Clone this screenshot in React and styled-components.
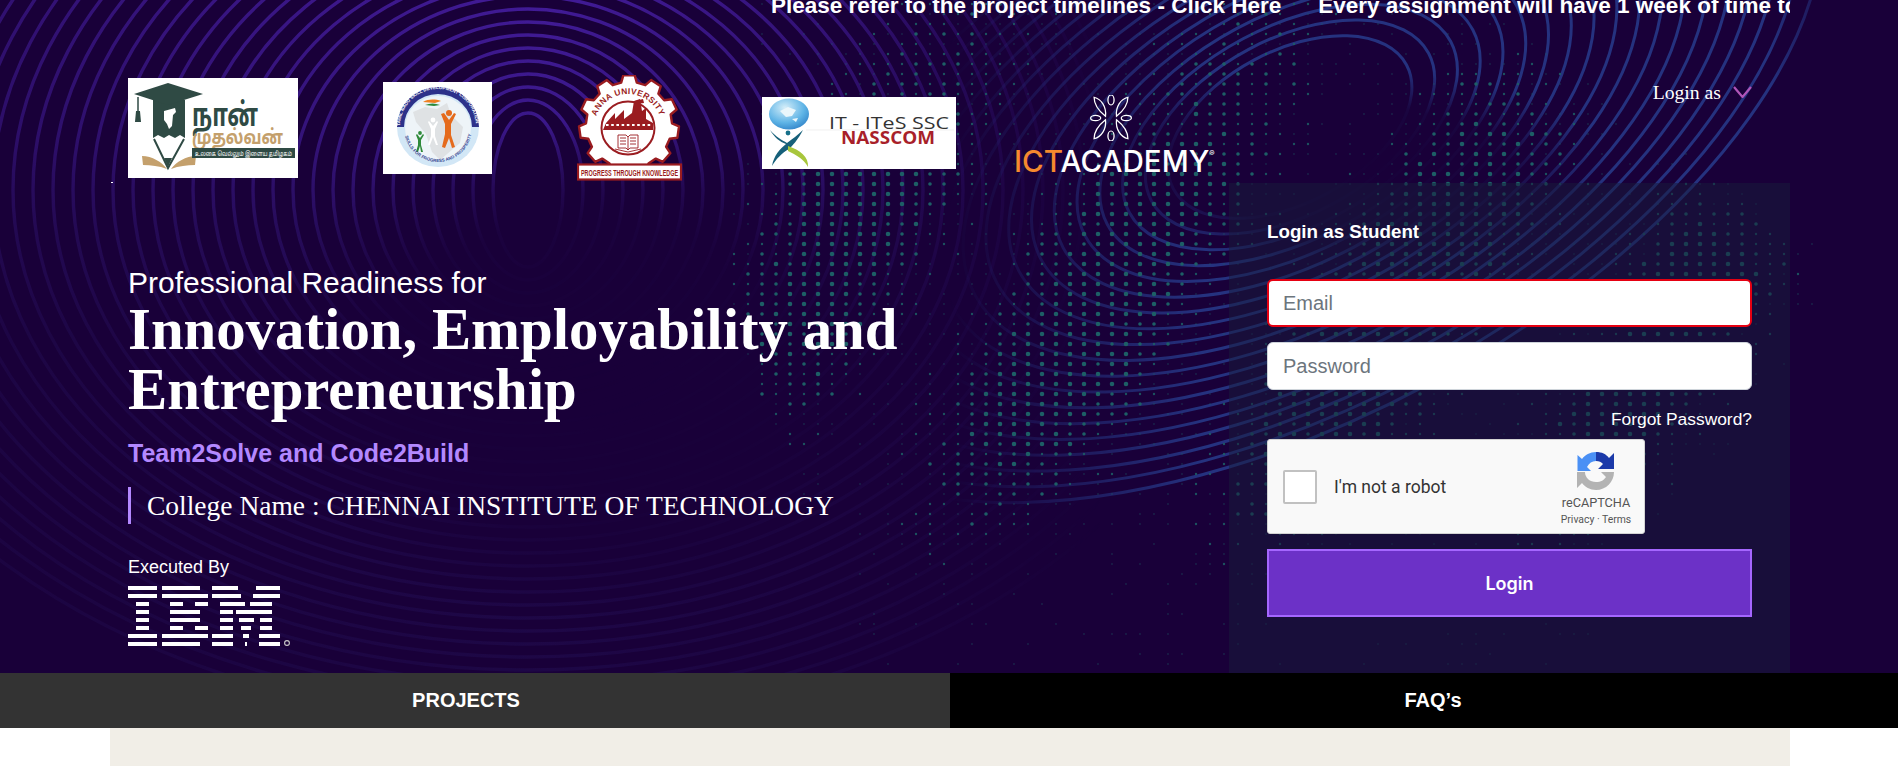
import React from "react";
import styled, { createGlobalStyle } from "styled-components";

const GlobalStyle = createGlobalStyle`
    html, body {
        margin: 0;
        height: 766px;
        overflow: hidden;
        background: #fff;
        font-family: "Liberation Sans", Arial, sans-serif;
    }
`;

const Hero = styled.section`
    position: relative;
    height: 673px;
    background: #190039;
    overflow: hidden;
`;

const Backdrop = styled.svg`
    position: absolute;
    inset: 0;
    width: 1898px;
    height: 673px;
`;

const Wrap = styled.div`
    position: relative;
    width: 1680px;
    margin-left: 110px;
`;

const Marquee = styled.div`
    height: 22px;
    padding-left: 661px;
    overflow: hidden;
    white-space: nowrap;
    display: flex;
    gap: 37px;
`;

const MarqueeItem = styled.span`
    margin-top: -10px;
    line-height: 32px;
    font-size: 22.5px;
    font-weight: 700;
    color: #fff;
`;

const Header = styled.header`
    height: 161px;
    padding: 0 38px 0 18px;
    display: flex;
    align-items: flex-start;
`;

const Logo = styled.div`
    flex: none;
    margin-left: ${p => p.$left || 0}px;
    margin-top: ${p => p.$top}px;
    line-height: 0;
`;

const Speck = styled.i`
    position: absolute;
    left: 1px;
    top: 182px;
    width: 2px;
    height: 1px;
    background: #fff;
`;

const IctIcon = styled.div`
    display: flex;
    justify-content: center;
    padding-right: 6px;
`;

const IctName = styled.div`
    margin-top: 6px;
    font-family: "Inter", sans-serif;
    font-size: 29.6px;
    line-height: 28px;
    font-weight: 500;
    color: #fff;
    text-align: center;
    white-space: nowrap;

    b {
        font-weight: 500;
        color: #f58a2e;
    }

    sup {
        font-size: 8px;
        line-height: 0;
        vertical-align: 16px;
    }
`;

const LoginAs = styled.button`
    margin: 58px 0 0 auto;
    padding: 0;
    background: none;
    border: 0;
    display: flex;
    align-items: center;
    gap: 12px;
    font-family: "Liberation Serif", serif;
    font-size: 19.7px;
    line-height: 24px;
    color: #fff;
`;

const Main = styled.div`
    display: grid;
    grid-template-columns: 1119px 561px;
    height: 490px;
`;

const Intro = styled.div`
    padding: 83px 0 0 18px;
`;

const Lead = styled.div`
    font-size: 30px;
    line-height: 34px;
    color: #fff;
`;

const Headline = styled.h1`
    margin: 0;
    font-family: "Liberation Serif", serif;
    font-size: 58.8px;
    line-height: 60px;
    font-weight: 700;
    color: #fff;
    width: 800px;
`;

const Tagline = styled.div`
    margin-top: 18px;
    font-size: 25px;
    line-height: 30px;
    font-weight: 700;
    color: #b388ff;
`;

const College = styled.div`
    margin-top: 19px;
    padding-left: 16px;
    border-left: 3px solid #b388ff;
    font-family: "Liberation Serif", serif;
    font-size: 27.5px;
    line-height: 37px;
    color: #fff;
    white-space: nowrap;
`;

const Executed = styled.div`
    margin-top: 33px;
    font-size: 18px;
    line-height: 21px;
    color: #fff;
`;

const IbmMark = styled.svg`
    display: block;
    margin-top: 8px;
`;

const Panel = styled.div`
    padding: 38px 38px 0;
    background: rgba(24, 28, 60, 0.5);
`;

const PanelTitle = styled.div`
    font-size: 18.75px;
    line-height: 22px;
    font-weight: 700;
    color: #fff;
`;

const Field = styled.input`
    display: block;
    box-sizing: border-box;
    width: 100%;
    height: 48px;
    margin-top: ${p => p.$top}px;
    padding: 0 ${p => (p.$invalid ? 14 : 15)}px;
    background: #fff;
    border: ${p => (p.$invalid ? "2px solid #e60012" : "1px solid #ced4da")};
    border-radius: 6px;
    font-family: "Liberation Sans", sans-serif;
    font-size: 20px;
    outline: none;

    &::placeholder {
        color: #6c757d;
        opacity: 1;
    }
`;

const Forgot = styled.div`
    margin-top: 19px;
    text-align: right;
    font-size: 17.4px;
    line-height: 20px;
    color: #fff;
`;

const Captcha = styled.div`
    box-sizing: border-box;
    width: 378px;
    height: 95px;
    margin-top: 10px;
    padding: 0 10px 0 15px;
    background: #f9f9f9;
    border: 1px solid #d3d3d3;
    border-radius: 3px;
    display: flex;
    align-items: center;
    font-family: "Roboto", sans-serif;
`;

const CaptchaBox = styled.div`
    box-sizing: border-box;
    width: 34px;
    height: 34px;
    background: #fff;
    border: 2px solid #c1c1c1;
    border-radius: 2px;
`;

const CaptchaLabel = styled.span`
    margin-left: 17px;
    font-size: 17.5px;
    color: #333;
`;

const CaptchaBrand = styled.div`
    margin-left: auto;
    width: 76px;
    padding-top: 5px;
    display: flex;
    flex-direction: column;
    align-items: center;
    color: #555;
`;

const BrandName = styled.span`
    margin-top: 5px;
    font-size: 12.7px;
    line-height: 15px;
`;

const BrandLinks = styled.span`
    margin-top: 3px;
    font-size: 10.4px;
    line-height: 13px;
    white-space: nowrap;
`;

const Submit = styled.button`
    display: block;
    width: 100%;
    height: 68px;
    margin-top: 15px;
    background: #6c31c7;
    border: 2px solid #a566ff;
    font-family: "Inter", sans-serif;
    font-size: 18px;
    font-weight: 600;
    color: #fff;
`;

const Tabs = styled.nav`
    display: grid;
    grid-template-columns: 950px 948px;
    height: 55px;
`;

const Tab = styled.div`
    display: flex;
    align-items: center;
    justify-content: center;
    padding: ${p => (p.$active ? "0 18px 0 0" : "0 0 0 18px")};
    background: ${p => (p.$active ? "#333" : "#000")};
    font-size: 20px;
    font-weight: 700;
    color: #fff;
`;

const Content = styled.main`
    width: 1680px;
    height: 38px;
    margin-left: 110px;
    background: #f1eee7;
`;

// seeded noise so that the dot field is the same on every render
const noise = (x, y) => {
    const v = Math.sin(x * 12.9898 + y * 78.233) * 43758.5453;
    return v - Math.floor(v);
};

function dotField() {
    const buckets = ["", "", "", ""];
    for (let x = 706; x < 1860; x += 14) {
        for (let y = 4; y < 673; y += 10) {
            const left = y < 170 ? 735 + (170 - y) * 0.1 : y < 300 ? 722 : 722 + (y - 300) * 0.42;
            const right = y < 270 ? 1850 - (270 - y) * 1.4 : 1850 - (y - 270) * 0.6;
            if (x < left || x > right) continue;
            const band = y < 170 ? 0.35 + (y / 170) * 0.4 : y < 400 ? 1 : Math.max(0.08, 1 - (y - 400) / 190);
            const edge = Math.min(1, (x - left) / 170 + 0.45, (right - x) / 150 + 0.2);
            const wave = 0.55 + 0.45 * Math.sin(x * 0.021 + y * 0.012);
            const s = band * edge * wave + (noise(x, y) - 0.5) * 0.4;
            if (s < 0.18) continue;
            const i = s > 0.72 ? 3 : s > 0.5 ? 2 : s > 0.32 ? 1 : 0;
            buckets[i] += `M${x} ${y}h0`;
        }
    }
    return buckets;
}

const dots = dotField();
const purpleRings = Array.from({ length: 36 }, (_, k) => k);
const blueRings = Array.from({ length: 19 }, (_, k) => k + 2);

function HeroBackdrop() {
    return (
        <Backdrop viewBox="0 0 1898 673" aria-hidden="true">
            <defs>
                <linearGradient id="ringFade" gradientUnits="userSpaceOnUse" x1="0" y1="0" x2="0" y2="673">
                    <stop offset="0" stopColor="#421b98" />
                    <stop offset="0.2" stopColor="#3a1788" />
                    <stop offset="0.34" stopColor="#2a0e62" />
                    <stop offset="0.5" stopColor="#21094d" />
                    <stop offset="1" stopColor="#1e0746" />
                </linearGradient>
                <linearGradient id="blueFade" gradientUnits="userSpaceOnUse" x1="950" y1="0" x2="1860" y2="0">
                    <stop offset="0" stopColor="#000" />
                    <stop offset="0.28" stopColor="#fff" />
                    <stop offset="0.9" stopColor="#fff" />
                    <stop offset="1" stopColor="#000" />
                </linearGradient>
                <linearGradient id="purpleEdge" gradientUnits="userSpaceOnUse" x1="0" y1="0" x2="1100" y2="0">
                    <stop offset="0" stopColor="#999" />
                    <stop offset="0.5" stopColor="#fff" />
                    <stop offset="0.75" stopColor="#aaa" />
                    <stop offset="1" stopColor="#000" />
                </linearGradient>
                <radialGradient id="purpleHole">
                    <stop offset="0" stopColor="#000" />
                    <stop offset="0.6" stopColor="#000" stopOpacity="0.85" />
                    <stop offset="1" stopColor="#000" stopOpacity="0" />
                </radialGradient>
                <radialGradient id="blueHole">
                    <stop offset="0" stopColor="#000" />
                    <stop offset="0.6" stopColor="#000" stopOpacity="0.9" />
                    <stop offset="1" stopColor="#000" stopOpacity="0" />
                </radialGradient>
                <mask id="blueMask" maskUnits="userSpaceOnUse" x="0" y="0" width="1898" height="673">
                    <rect width="1898" height="673" fill="url(#blueFade)" />
                    <ellipse cx="1340" cy="165" rx="270" ry="100" fill="url(#blueHole)" />
                </mask>
                <mask id="purpleMask" maskUnits="userSpaceOnUse" x="0" y="0" width="1898" height="673">
                    <rect width="1898" height="673" fill="url(#purpleEdge)" />
                    <ellipse cx="590" cy="370" rx="340" ry="250" fill="url(#purpleHole)" />
                </mask>
            </defs>
            <g mask="url(#purpleMask)" fill="none" stroke="url(#ringFade)" strokeWidth="3.4">
                {purpleRings.map(k => (
                    <ellipse key={k} cx="528" cy="190" rx={35 + 20 * k} ry={77 + 13 * k} />
                ))}
            </g>
            <g mask="url(#blueMask)" fill="none" stroke="#25327f" strokeWidth="3">
                {blueRings.map(k => (
                    <ellipse
                        key={k}
                        cx="1290"
                        cy="127"
                        rx={82 + 25 * k}
                        ry={52 + 12 * k}
                        transform="rotate(-28 1290 127)"
                    />
                ))}
            </g>
            <g fill="none" stroke="#1d5f66" strokeLinecap="round">
                <path d={dots[0]} strokeWidth="1.4" opacity="0.7" />
                <path d={dots[1]} strokeWidth="2.4" opacity="0.85" />
                <path d={dots[2]} strokeWidth="3.6" />
                <path d={dots[3]} strokeWidth="4.6" />
            </g>
        </Backdrop>
    );
}

function NaanLogo() {
    const green = "#2f4a44";
    const tan = "#c4a06c";
    const tamil = "'Noto Sans Tamil', 'Lohit Tamil', 'Noto Sans', sans-serif";
    return (
        <svg width="170" height="100" viewBox="0 0 170 100">
            <rect width="170" height="100" fill="#fff" />
            <path d="M25 22h32v38l-5-3-5 3-6-3-5 3-6-3-5 3z" fill={green} />
            <path d="M26 61 40 90 56 61" fill="none" stroke={green} strokeWidth="2" />
            <path d="M36 80 40 89 44 80z" fill={green} />
            <path d="M6 16 40 5 75 16 40 27z" fill={green} />
            <path d="M10 19v22" stroke={green} strokeWidth="1.5" />
            <path d="M8 33h4l1 11H7z" fill={green} />
            <path d="M36 33l11-3 1 4-3 3-1 11-3 3-2-5-3-4z" fill="#fff" />
            <path d="M14 78c10 0 20 6 25 13-8-3-16-4-24-4zM68 78c-10 0-20 6-25 13 8-3 16-4 24-4z" fill={tan} />
            <text x="64" y="48" fontFamily={tamil} fontSize="32" fontWeight="700" fill={green} textLength="66" lengthAdjust="spacingAndGlyphs">நான்</text>
            <text x="64" y="66" fontFamily={tamil} fontSize="20" fontWeight="700" fill={tan} textLength="91" lengthAdjust="spacingAndGlyphs">முதல்வன்</text>
            <rect x="64" y="70" width="103" height="10" fill={green} />
            <text x="67" y="77.500" fontFamily={tamil} fontSize="6.500" fill="#fff" textLength="97" lengthAdjust="spacingAndGlyphs">உலகை வெல்லும் இளைய தமிழகம்</text>
        </svg>
    );
}

function SkillLogo() {
    return (
        <svg width="109" height="92" viewBox="0 0 109 92">
            <defs>
                <path id="skillTop" d="M17 45a38 38 0 0 1 76 0" />
                <path id="skillBottom" d="M21 46a34 34 0 0 0 68 0" />
            </defs>
            <rect width="109" height="92" fill="#fff" />
            <ellipse cx="55" cy="45" rx="41" ry="40" fill="#d2e7f6" />
            <path d="M14 45a41 40 0 0 1 82 0h-7a34 33 0 0 0-68 0z" fill="#2c318a" />
            <ellipse cx="55" cy="46" rx="33" ry="32" fill="#eef4f8" />
            <path d="M30 30l12-5 12 2 10-6 4 12 12 12-3 16-20 17-8-8-6-18-10-12z" fill="#dfe2e4" />
            <path d="M40 20c5-3 12-3 18-1l-6 2z" fill="#ef7f22" />
            <path d="M42 23c5-2 10-2 15 0l-6 1z" fill="#2c8a3c" />
            <path d="M61 31l5 7 5-7 2 1-5 10v11l4 12-3 1-3-10-4 10-3-1 3-13V42l-4-10z" fill="#e56a1b" />
            <circle cx="66" cy="31" r="3" fill="#e56a1b" />
            <path d="M46 39l4 5 4-5 1 1-3 7v7l3 9h-2l-3-8-3 8h-2l3-9v-7l-3-7z" fill="#fff" />
            <circle cx="50" cy="38" r="2.400" fill="#fff" />
            <path d="M34 52l3 4 3-4 1 1-3 5v5l2 7h-2l-1-6-2 6h-2l2-7v-5l-2-5z" fill="#2f8a3a" />
            <circle cx="37" cy="51" r="1.900" fill="#2f8a3a" />
            <text fontFamily="'Liberation Sans', sans-serif" fontSize="4.600" fontWeight="700" fill="#fff">
                <textPath href="#skillTop" startOffset="1">TAMIL NADU SKILL DEVELOPMENT CORPORATION</textPath>
            </text>
            <text fontFamily="'Liberation Sans', sans-serif" fontSize="4.400" fontWeight="700" fill="#3b4a94">
                <textPath href="#skillBottom" startOffset="8">SKILLS FOR PROGRESS AND PROSPERITY</textPath>
            </text>
        </svg>
    );
}

function gearPath(cx, cy, outer, inner, teeth) {
    const step = (Math.PI * 2) / teeth;
    let d = "";
    for (let i = 0; i < teeth; i++) {
        const a = i * step - Math.PI / 2;
        const pts = [
            [inner, a - step * 0.32],
            [outer, a - step * 0.2],
            [outer, a + step * 0.2],
            [inner, a + step * 0.32],
        ];
        pts.forEach(([r, t], j) => {
            const px = (cx + r * Math.cos(t)).toFixed(1);
            const py = (cy + r * Math.sin(t)).toFixed(1);
            d += `${i === 0 && j === 0 ? "M" : "L"}${px} ${py}`;
        });
    }
    return d + "Z";
}

function AnnaLogo() {
    const maroon = "#9a1c20";
    return (
        <svg width="106" height="106" viewBox="0 0 106 106">
            <defs>
                <path id="annaArc" d="M17 53a34 34 0 0 1 68 0" />
            </defs>
            <path d={gearPath(52, 50, 50, 43, 11)} fill="#fff" stroke={maroon} strokeWidth="2.400" strokeLinejoin="round" />
            <circle cx="51" cy="53" r="26.500" fill="#fff" stroke={maroon} strokeWidth="2" />
            <path d="M26 55L29 48L38 38V44L47 35V44L55 38L57 26L63 24L65 36L69 33V44L76 48L76 55Z" fill={maroon} />
            <path d="M58 26l8-2 1 4-7 1z" fill={maroon} />
            <path d="M29 50h46" stroke="#fff" strokeWidth="1.800" strokeDasharray="2.600 2.600" />
            <g fill="none" stroke={maroon} strokeWidth="0.9">
                <path d="M41 60h8l2 2 2-2h8v13h-8l-2 2-2-2h-8z" />
                <path d="M38 74l13 3 13-3M51 62v13M43 63h6M43 66h6M43 69h6M53 63h6M53 66h6M53 69h6" />
            </g>
            <text fontFamily="'Liberation Sans', sans-serif" fontSize="8.400" fontWeight="700" fill={maroon} textAnchor="middle" letterSpacing="0.4">
                <textPath href="#annaArc" startOffset="50%">ANNA UNIVERSITY</textPath>
            </text>
            <rect x="1" y="89.500" width="103" height="15" fill="#fff" stroke={maroon} strokeWidth="2.200" />
            <text x="52.500" y="100.500" textAnchor="middle" fontFamily="'Liberation Sans', sans-serif" fontSize="9.400" fontWeight="700" fill={maroon} textLength="97" lengthAdjust="spacingAndGlyphs">PROGRESS THROUGH KNOWLEDGE</text>
        </svg>
    );
}

function NasscomLogo() {
    return (
        <svg width="194" height="72" viewBox="0 0 194 72">
            <defs>
                <radialGradient id="globe" cx="0.4" cy="0.3" r="0.8">
                    <stop offset="0" stopColor="#d5eef9" />
                    <stop offset="0.6" stopColor="#5fb4e6" />
                    <stop offset="1" stopColor="#2a7cc4" />
                </radialGradient>
            </defs>
            <rect width="194" height="72" fill="#fff" />
            <ellipse cx="27" cy="17" rx="20" ry="15.500" fill="url(#globe)" />
            <path d="M18 14l8-4 8 3-4 6-6 1zM30 22l6-1-2 4z" fill="#eaf6fb" />
            <path d="M8 33C14 40 20 43 25 46C30 42 36 38 41 33C36 43 30 49 27 52C20 56 14 62 10 69C12 58 18 52 24 47C18 45 12 40 8 33Z" fill="#16607a" />
            <path d="M26 49C38 53 47 60 46 70C42 62 34 58 26 54Z" fill="#a8c63c" />
            <circle cx="26" cy="36" r="2.400" fill="#16708a" />
            <path d="M44 33h148" stroke="#e6e6e6" strokeWidth="0.6" />
            <text x="67" y="32" fontFamily="'Open Sans', sans-serif" fontSize="17" fontWeight="500" fill="#333" textLength="120" lengthAdjust="spacingAndGlyphs">IT - ITeS SSC</text>
            <text x="79" y="47" fontFamily="'Open Sans', sans-serif" fontSize="17" fontWeight="700" fill="#a81f2a" textLength="94" lengthAdjust="spacingAndGlyphs">NASSCOM</text>
        </svg>
    );
}

function IctFlower() {
    const leaf = "M0 -5C7 -11 11 -18 11 -25C4 -23 -1 -15 0 -5Z";
    return (
        <svg width="46" height="46" viewBox="-21 -23 42 46" fill="none" stroke="#fff" strokeWidth="1.2" preserveAspectRatio="none">
            <ellipse cx="0" cy="-18" rx="2.800" ry="5" />
            <ellipse cx="0" cy="18" rx="2.800" ry="5" />
            <ellipse cx="-14" cy="0" rx="4.600" ry="2.600" />
            <ellipse cx="14" cy="0" rx="4.600" ry="2.600" />
            <path d={leaf} transform="translate(5 3) scale(0.95)" />
            <path d={leaf} transform="translate(-5 3) scale(-0.95 0.95)" />
            <path d={leaf} transform="translate(5 -3) scale(0.95 -0.95)" />
            <path d={leaf} transform="translate(-5 -3) scale(-0.95 -0.95)" />
        </svg>
    );
}

// one row of segments per stripe of the logo
const ibmRows = [
    [[0, 29], [34, 72], [84, 110], [128, 152]],
    [[0, 29], [34, 80], [84, 113], [125, 152]],
    [[8, 21], [42, 55], [67, 80], [92, 117], [122, 144]],
    [[8, 21], [42, 72], [92, 105], [108, 144]],
    [[8, 21], [42, 72], [92, 105], [111, 126], [132, 144]],
    [[8, 21], [42, 55], [67, 80], [92, 105], [113, 123], [132, 144]],
    [[0, 29], [34, 80], [84, 105], [115, 121], [131, 152]],
    [[0, 29], [34, 72], [84, 105], [117, 119], [131, 152]],
];

function IbmLogo() {
    return (
        <IbmMark width="164" height="60" viewBox="0 0 164 60" role="img" aria-label="IBM">
            {ibmRows.map((row, r) =>
                row.map(([a, b]) => (
                    <rect key={`${r}-${a}`} x={a} y={r * 8} width={b - a} height="4" fill="#fff" />
                ))
            )}
            <circle cx="159" cy="57" r="2.400" fill="none" stroke="#ccc" strokeWidth="1.1" />
        </IbmMark>
    );
}

function CaptchaIcon() {
    return (
        <svg width="38" height="38" viewBox="0 0 38 38">
            <path d="M19 0C13 0 8 3 5 7L0.500 3V19H14L10 15C12 11 15 9 19 9Z" fill="#4a90f5" />
            <path d="M19 0C25 0 29 2 32 6L37 1V17H21L26 12C24.500 10 22 9 19 9Z" fill="#1c3aa9" />
            <path d="M0 20H8C8 26 13 30 19 30C24 30 27 28 29 25L24 20H37V20C37 30 29 38 19 38C13 38 8 35 5 31L0 36Z" fill="#b3b3b3" />
        </svg>
    );
}

function App() {
    return (
        <>
            <GlobalStyle />
            <Hero>
                <HeroBackdrop />
                <Wrap>
                    <Marquee>
                        <MarqueeItem>Please refer to the project timelines - Click Here</MarqueeItem>
                        <MarqueeItem>Every assignment will have 1 week of time to complete</MarqueeItem>
                    </Marquee>
                    <Speck />
                    <Header>
                        <Logo $top={56}><NaanLogo /></Logo>
                        <Logo $top={60} $left={85}><SkillLogo /></Logo>
                        <Logo $top={53} $left={85}><AnnaLogo /></Logo>
                        <Logo $top={75} $left={79}><NasscomLogo /></Logo>
                        <Logo $top={73} $left={58}>
                            <IctIcon><IctFlower /></IctIcon>
                            <IctName><b>ICT</b>ACADEMY<sup>®</sup></IctName>
                        </Logo>
                        <LoginAs>
                            Login as
                            <svg width="19" height="12" viewBox="0 0 19 12" fill="none" stroke="#b055b8" strokeWidth="2.200">
                                <path d="M1 1l8.500 10L18 1" />
                            </svg>
                        </LoginAs>
                    </Header>
                    <Main>
                        <Intro>
                            <Lead>Professional Readiness for</Lead>
                            <Headline>Innovation, Employability and Entrepreneurship</Headline>
                            <Tagline>Team2Solve and Code2Build</Tagline>
                            <College>College Name : CHENNAI INSTITUTE OF TECHNOLOGY</College>
                            <Executed>Executed By</Executed>
                            <IbmLogo />
                        </Intro>
                        <Panel>
                            <PanelTitle>Login as Student</PanelTitle>
                            <Field $top={36} $invalid placeholder="Email" />
                            <Field $top={15} placeholder="Password" type="password" />
                            <Forgot>Forgot Password?</Forgot>
                            <Captcha>
                                <CaptchaBox />
                                <CaptchaLabel>I'm not a robot</CaptchaLabel>
                                <CaptchaBrand>
                                    <CaptchaIcon />
                                    <BrandName>reCAPTCHA</BrandName>
                                    <BrandLinks>Privacy · Terms</BrandLinks>
                                </CaptchaBrand>
                            </Captcha>
                            <Submit>Login</Submit>
                        </Panel>
                    </Main>
                </Wrap>
            </Hero>
            <Tabs>
                <Tab $active>PROJECTS</Tab>
                <Tab>FAQ’s</Tab>
            </Tabs>
            <Content />
        </>
    );
}

export default App;
